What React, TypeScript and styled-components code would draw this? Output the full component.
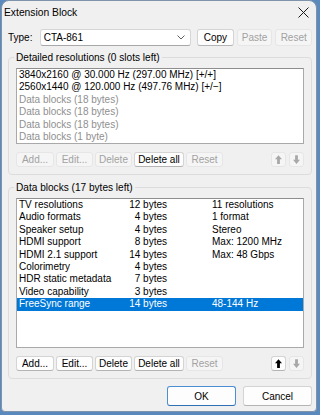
import React from 'react';
import styled, { createGlobalStyle } from 'styled-components';

const GlobalStyle = createGlobalStyle`
    html, body {
        margin: 0;
        padding: 0;
        width: 320px;
        height: 415px;
        overflow: hidden;
        background: #5a89bd;
        font-family: 'Liberation Sans', Arial, sans-serif;
    }
`;

type Row = { name: string; size: string; info: string };

const resolutions = [
    { text: '3840x2160 @ 30.000 Hz (297.00 MHz) [+/+]', muted: false },
    { text: '2560x1440 @ 120.000 Hz (497.76 MHz) [+/\u2212]', muted: false },
    { text: 'Data blocks (18 bytes)', muted: true },
    { text: 'Data blocks (18 bytes)', muted: true },
    { text: 'Data blocks (18 bytes)', muted: true },
    { text: 'Data blocks (1 byte)', muted: true },
];

const blocks: Row[] = [
    { name: 'TV resolutions', size: '12 bytes', info: '11 resolutions' },
    { name: 'Audio formats', size: '4 bytes', info: '1 format' },
    { name: 'Speaker setup', size: '4 bytes', info: 'Stereo' },
    { name: 'HDMI support', size: '8 bytes', info: 'Max: 1200 MHz' },
    { name: 'HDMI 2.1 support', size: '14 bytes', info: 'Max: 48 Gbps' },
    { name: 'Colorimetry', size: '4 bytes', info: '' },
    { name: 'HDR static metadata', size: '7 bytes', info: '' },
    { name: 'Video capability', size: '3 bytes', info: '' },
    { name: 'FreeSync range', size: '14 bytes', info: '48-144 Hz' },
];

const ArrowIcon = ({ down, disabled }: { down?: boolean; disabled?: boolean }) => (
    <svg width="7" height="9" viewBox="0 0 8 10" style={{ transform: down ? 'rotate(180deg)' : undefined }}>
        <path d="M4 0 L8 4.6 H5.6 V10 H2.4 V4.6 H0 Z" fill={disabled ? '#a8a8a8' : '#000'} />
    </svg>
);

const ListButtons = ({ enabled, upEnabled }: { enabled: boolean; upEnabled: boolean }) => (
    <ButtonRow>
        <SmallButton $w={38} disabled={!enabled}>Add...</SmallButton>
        <SmallButton $w={37} disabled={!enabled}>Edit...</SmallButton>
        <SmallButton $w={37} disabled={!enabled}>Delete</SmallButton>
        <SmallButton $w={50}>Delete all</SmallButton>
        <SmallButton $w={37} disabled>Reset</SmallButton>
        <Spacer />
        <ArrowButton disabled={!upEnabled}>
            <ArrowIcon disabled={!upEnabled} />
        </ArrowButton>
        <ArrowButton disabled>
            <ArrowIcon down disabled />
        </ArrowButton>
    </ButtonRow>
);

const App = (): JSX.Element => {
    return (
        <>
            <GlobalStyle />
            <Window>
                <TitleBar>
                    <Title>Extension Block</Title>
                    <svg width="11" height="11" viewBox="0 0 11 11">
                        <path d="M0.5 0.5 L10.5 10.5 M10.5 0.5 L0.5 10.5" stroke="#1a1a1a" strokeWidth="1" />
                    </svg>
                </TitleBar>
                <Content>
                    <TypeRow>
                        <Label>Type:</Label>
                        <Combo>
                            <span>CTA-861</span>
                            <svg width="8" height="5" viewBox="0 0 8 5">
                                <path d="M0.5 0.5 L4 4 L7.5 0.5" fill="none" stroke="#606060" strokeWidth="1" />
                            </svg>
                        </Combo>
                        <TopButton $w={37}>Copy</TopButton>
                        <TopButton $w={36} disabled>
                            Paste
                        </TopButton>
                        <TopButton $w={37} disabled>
                            Reset
                        </TopButton>
                    </TypeRow>

                    <Group $gap={5}>
                        <Legend>Detailed resolutions (0 slots left)</Legend>
                        <ListBox $h={76}>
                            {resolutions.map((r, i) => (
                                <ListRow key={i} $muted={r.muted}>
                                    {r.text}
                                </ListRow>
                            ))}
                        </ListBox>
                        <ListButtons enabled={false} upEnabled={false} />
                    </Group>

                    <Group $gap={6}>
                        <Legend>Data blocks (17 bytes left)</Legend>
                        <ListBox $h={150}>
                            {blocks.map((b, i) => (
                                <GridRow key={i} $selected={i === blocks.length - 1}>
                                    <span>{b.name}</span>
                                    <SizeCell>{b.size}</SizeCell>
                                    <InfoCell>{b.info}</InfoCell>
                                </GridRow>
                            ))}
                        </ListBox>
                        <ListButtons enabled upEnabled />
                    </Group>

                    <DialogButtons>
                        <DialogButton $default>OK</DialogButton>
                        <DialogButton>Cancel</DialogButton>
                    </DialogButtons>
                </Content>
            </Window>
        </>
    );
};

const Window = styled.div`
    box-sizing: border-box;
    width: 316px;
    height: 412px;
    margin-left: 1px;
    background: #f0f0f0;
    border: 1px solid #7f93aa;
    border-radius: 8px 8px 4px 4px;
    display: flex;
    flex-direction: column;
    overflow: hidden;
`;

const TitleBar = styled.div`
    height: 24px;
    display: flex;
    align-items: center;
    justify-content: space-between;
    padding: 0 7px 2px 2px;
    box-sizing: border-box;
`;

const Title = styled.div`
    font-size: 10.3px;
    color: #000;
`;

const Content = styled.div`
    padding: 0 4px 0 6px;
    font-size: 10px;
`;

const TypeRow = styled.div`
    display: flex;
    align-items: center;
    height: 17px;
    margin-top: 4px;
    gap: 3px;
`;

const Label = styled.span`
    width: 29px;
    color: #000;
`;

const Combo = styled.div`
    box-sizing: border-box;
    width: 153px;
    height: 17px;
    margin-right: 3px;
    display: flex;
    align-items: center;
    justify-content: space-between;
    padding: 0 5px 0 3px;
    background: #fff;
    border: 1px solid #d6d6d6;
    border-bottom-color: #a8a8a8;
    border-radius: 3px;
`;

const ButtonBase = styled.button<{ $w?: number }>`
    box-sizing: border-box;
    width: ${({ $w }) => ($w ? `${$w}px` : 'auto')};
    padding: 0;
    margin: 0;
    font-family: inherit;
    font-size: 10px;
    color: #000;
    background: #fdfdfd;
    border: 1px solid #d4d4d4;
    border-bottom-color: #b4b4b4;
    border-radius: 3px;
    display: flex;
    align-items: center;
    justify-content: center;

    &:disabled {
        color: #a2a2a2;
        background: #f5f5f5;
        border-color: #e6e6e6;
    }
`;

const TopButton = styled(ButtonBase)`
    height: 17px;
`;

const SmallButton = styled(ButtonBase)`
    height: 15px;
`;

const ArrowButton = styled(ButtonBase)`
    width: 15px;
    height: 15px;
`;

const Spacer = styled.div`
    flex: 1;
`;

const Group = styled.fieldset<{ $gap: number }>`
    margin: ${({ $gap }) => $gap}px 0 0;
    padding: 0 7px 7px;
    border: 1px solid #dcdcdc;
    border-radius: 4px;
    min-width: 0;
`;

const Legend = styled.legend`
    padding: 0 2px;
    margin-left: -2px;
    font-size: 10.1px;
    line-height: 13px;
    color: #000;
`;

const ListBox = styled.div<{ $h: number }>`
    box-sizing: border-box;
    height: ${({ $h }) => $h}px;
    margin-top: 4px;
    background: #fff;
    border: 1px solid #a9a9a9;
    border-top-color: #8e8e8e;
    overflow: hidden;
`;

const ListRow = styled.div<{ $muted?: boolean }>`
    height: 12.4px;
    line-height: 12.4px;
    padding-left: 2px;
    white-space: nowrap;
    color: ${({ $muted }) => ($muted ? '#8f8f8f' : '#000')};
`;

const GridRow = styled.div<{ $selected?: boolean }>`
    display: grid;
    grid-template-columns: 101px 47px 1fr;
    height: 12.4px;
    line-height: 12.4px;
    padding-left: 2px;
    white-space: nowrap;
    color: ${({ $selected }) => ($selected ? '#fff' : '#000')};
    background: ${({ $selected }) => ($selected ? '#0078d7' : 'transparent')};
`;

const SizeCell = styled.span`
    text-align: right;
`;

const InfoCell = styled.span`
    padding-left: 45px;
`;

const ButtonRow = styled.div`
    display: flex;
    gap: 2px;
    margin-top: 8px;

    & > button:last-child {
        margin-left: 1px;
    }
`;

const DialogButtons = styled.div`
    display: flex;
    justify-content: flex-end;
    gap: 7px;
    margin-top: 7px;
`;

const DialogButton = styled(ButtonBase)<{ $default?: boolean }>`
    width: 69px;
    height: 20px;
    border-color: ${({ $default }) => ($default ? '#4c8ed3' : '#d4d4d4')};
    border-bottom-color: ${({ $default }) => ($default ? '#2f6fb6' : '#b4b4b4')};
`;

export default App;
